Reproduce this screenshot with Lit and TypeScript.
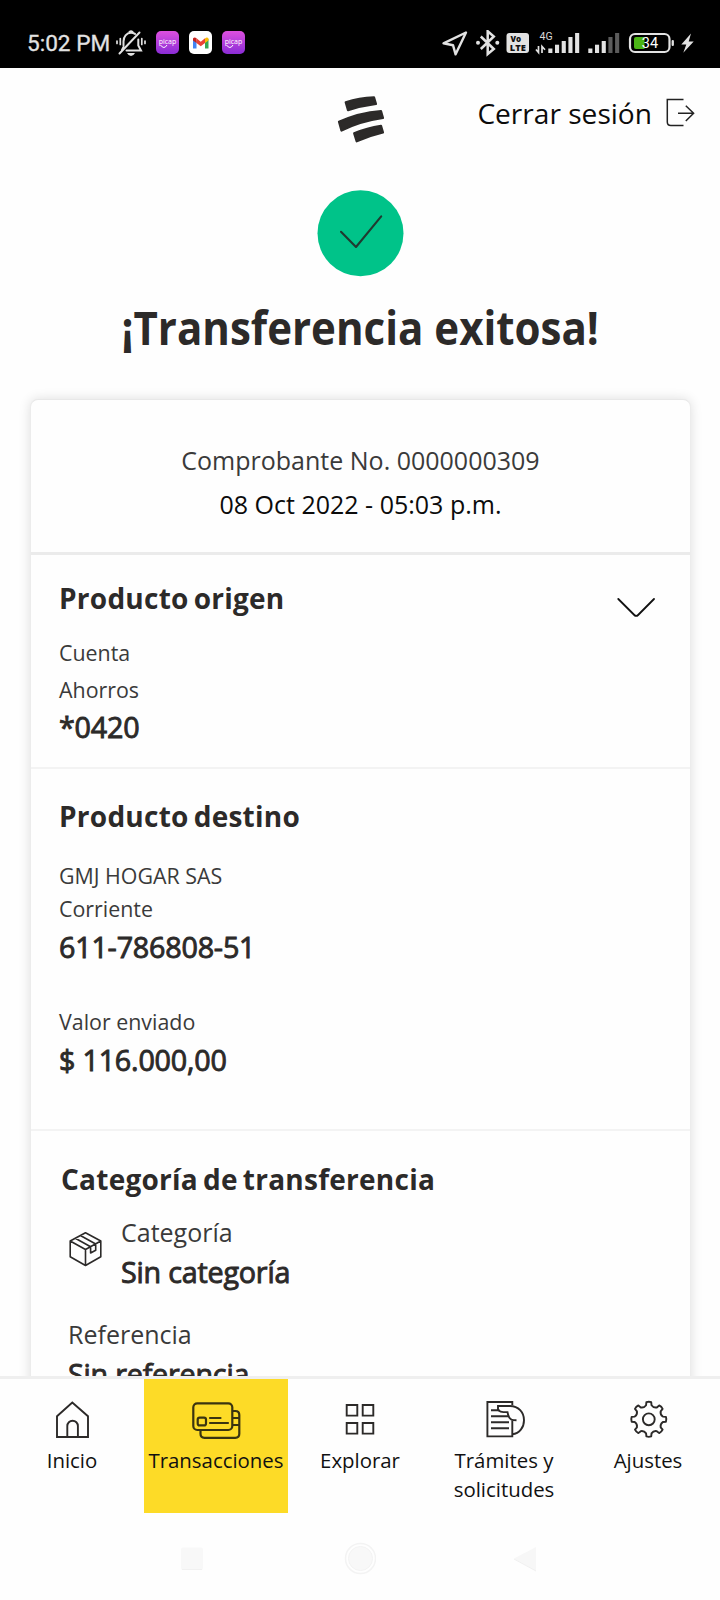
import { LitElement, html, css, svg } from "lit";
import { customElement } from "lit/decorators.js";

// Outline of an eight-toothed gear centred on (cx, cy).
function gearPath(cx: number, cy: number): string {
  const pt = (r: number, deg: number) => {
    const a = (deg * Math.PI) / 180;
    return `${(cx + r * Math.cos(a)).toFixed(2)} ${(cy + r * Math.sin(a)).toFixed(2)}`;
  };
  let d = "";
  for (let i = 0; i < 8; i++) {
    const c = i * 45 - 90;
    d += `${i ? "L" : "M"}${pt(14.3, c - 11)} L${pt(17.3, c - 8)} Q${pt(18, c)} ${pt(17.3, c + 8)} L${pt(14.3, c + 11)} Q${pt(12.2, c + 22.5)} ${pt(14.3, c + 34)} `;
  }
  return d + "Z";
}

// Every icon is drawn in screen units; the viewBox picks out its own area.
const icon = (x: number, y: number, w: number, h: number, body: unknown) =>
  html`<svg width=${w} height=${h} viewBox="${x} ${y} ${w} ${h}" fill="none" aria-hidden="true">${body}</svg>`;

const picap = () => icon(156, 31, 23, 23, svg`
  <defs><linearGradient id="pg" x1="0" y1="0" x2="0" y2="1"><stop offset="0" stop-color="#dd50df"/><stop offset="1" stop-color="#8a2cd6"/></linearGradient></defs>
  <rect x="156" y="31" width="23" height="23" rx="5" fill="url(#pg)"/>
  <text x="167.5" y="44" text-anchor="middle" font-family="Open Sans, sans-serif" font-size="7" fill="#fff">picap</text>
  <path d="M160.500 45q3.500 5 6.500 0" stroke="#fff" stroke-width="1"/>`);

const bars = (x: number, lit: number) =>
  [4.500, 8.300, 12, 16, 20].map((h, i) => svg`<rect x=${x + i * 6.7} y=${53 - h} width="4.100" height=${h} fill=${i < lit ? "#e2e2e2" : "#5c5c5c"}/>`);

@customElement("app-root")
export class AppRoot extends LitElement {
  static styles = css`
    :host { display: block; }
    * { box-sizing: border-box; }
    svg { display: block; flex: none; }
    .page { width: 720px; height: 1600px; background: #fefefe; display: flex; flex-direction: column; overflow: hidden; font-family: "Open Sans", "Noto Sans", sans-serif; color: #2c2a29; white-space: nowrap; }
    .status { height: 68px; flex: none; background: #000; display: flex; justify-content: space-between; padding: 30px 26px 0 27px; color: #e2e2e2; }
    .side { display: flex; align-items: flex-start; }
    .time { width: 89px; font: 400 22.6px/27px Roboto, sans-serif; -webkit-text-stroke: .3px #e2e2e2; }
    .notes { display: flex; gap: 10px; }
    .notes svg { margin-top: 1px; }
    .notes svg:first-child { margin-top: 0; }
    .sys { gap: 6px; }
    .header { height: 122px; flex: none; display: grid; grid-template-columns: 337px 48px 1fr; padding-top: 26px; }
    .logout { display: flex; justify-content: flex-end; padding-right: 25px; gap: 14px; color: #0b0b0b; }
    .logout span { font-size: 28.1px; line-height: 38px; }
    .logout svg { margin-top: 4px; }
    .hero { height: 189px; flex: none; display: flex; flex-direction: column; align-items: center; }
    .title { margin: 19px 0 0; font-size: 46px; line-height: 62px; font-weight: 700; transform: scaleX(.914); }
    .scroll { flex: none; height: 997px; overflow: hidden; padding: 20px 29px 0 30px; }
    .card { height: 1100px; border: 1px solid #ececec; border-top-color: #e8e8e8; border-radius: 8px; background: #fefefe; box-shadow: 0 0 12px rgba(0, 0, 0, .13); }
    .part { border-bottom: 2px solid #f3f3f3; padding-left: 28px; }
    .receipt { height: 155px; border-bottom: 3px solid #ebebeb; padding: 38px 0 0; text-align: center; font-size: 25px; line-height: 44.4px; color: #3a3a3a; }
    .date { color: #0b0b0b; }
    .origin { height: 214px; padding-top: 23px; display: flex; justify-content: space-between; padding-right: 35px; }
    .origin svg { margin-top: 19px; }
    .dest { height: 362px; padding-top: 27px; }
    h2 { margin: 0; font-size: 28px; line-height: 40px; font-weight: 700; letter-spacing: .25px; word-spacing: -2.5px; }
    .label { font-size: 21.4px; line-height: 32.6px; color: #3a3a3a; }
    .value { font-size: 28.7px; line-height: 40px; letter-spacing: -.2px; -webkit-text-stroke: .9px #2c2a29; }
    .origin .label { line-height: 36.7px; }
    .origin .first { margin-top: 17px; }
    .origin .value { margin-top: -1px; }
    .dest .first { margin-top: 24px; }
    .dest .value { margin-top: 2px; }
    .dest .amount { margin-top: 38.4px; }
    .category { padding: 28px 0 0 30px; }
    .row { display: flex; gap: 19px; margin: 15px 0 0 8px; }
    .row svg { margin-top: 17px; }
    .big { font-size: 25px; line-height: 36px; color: #3a3a3a; }
    .category .value { margin-top: 2px; }
    .ref { margin: 24px 0 0 7px; }
    .nav { height: 138px; flex: none; border-top: 3px solid #efefef; display: grid; grid-template-columns: repeat(5, 144px); background: #fefefe; }
    .item { display: flex; flex-direction: column; align-items: center; padding-top: 20px; font-size: 20.4px; line-height: 29px; text-align: center; color: #111; height: 134px; }
    .item span { margin-top: 6px; white-space: pre-line; }
    .active { background: #fddb27; }
    .keys { flex: 1; display: grid; grid-template-columns: repeat(3, 32px); column-gap: 134px; justify-content: center; padding-top: 28px; }
  `;

  render() {
    const ink = "#2c2a29";
    return html`
      <div class="page">
        <div class="status">
          <div class="side">
            <div class="time">5:02 PM</div>
            <div class="notes">
              ${icon(116, 30, 30, 27, svg`
                <g stroke="#e2e2e2" stroke-width="2" stroke-linecap="round">
                  <path d="M119.500 53.500L139.500 32.500"/>
                  <path d="M123.500 45.500V41.500c0-5 3-8.700 7.500-8.700 1.500 0 2.800.4 4 1.100"/>
                  <path d="M138.300 39.500v6l2.700 5H126.500M122 50l1.500-3"/>
                  <path d="M129.500 32q1.500-1.500 3 0"/>
                  <path d="M117 41v2.500M120.300 38.500v6M141.800 38.500v6M145 41v2.500" stroke-width="1.700"/>
                </g>
                <path d="M127 53h8q-1.500 3-4 3t-4-3z" fill="#e2e2e2"/>`)}
              ${picap()}
              ${icon(189, 31, 23, 23, svg`
                <rect x="189" y="31" width="23" height="23" rx="5" fill="#fff"/>
                <path d="M193 39v9.500h3.500V41z" fill="#4285f4"/>
                <path d="M208.500 39v9.500H205V41z" fill="#34a853"/>
                <path d="M205 38.500V43l3.500-2.500v-2q-1.500-2-3.500 0z" fill="#fbbc04"/>
                <path d="M196.500 38.300l4.250 3.400 4.250-3.400V43l-4.250 3.200L196.500 43z" fill="#ea4335"/>
                <path d="M193 38.500v2l3.500 2.500v-4.700q-2-1.800-3.500.2z" fill="#c5221f"/>`)}
              ${picap()}
            </div>
          </div>
          <div class="side sys">
            ${icon(441, 30, 28, 27, svg`<path d="M467 32.500L444.500 43.300L454 45.200L456.600 54.300Z" stroke="#e2e2e2" stroke-width="2.400" stroke-linejoin="round"/>`)}
            ${icon(475, 30, 26, 27, svg`
              <path d="M481.800 36.500L494.800 49L488.700 54V31.200L494.800 36.500L481.800 49" stroke="#e2e2e2" stroke-width="2.500"/>
              <circle cx="479" cy="42.800" r="2" fill="#e2e2e2"/><circle cx="498.300" cy="42.800" r="2" fill="#e2e2e2"/>`)}
            ${icon(507, 30, 23, 27, svg`
              <rect x="507.500" y="33" width="22.500" height="20" rx="3" fill="#e2e2e2"/>
              <g font-family="Open Sans, sans-serif" font-weight="800" font-size="8" fill="#111">
                <text x="511.500" y="42">Vo</text><text x="510.800" y="50.800" textLength="16" lengthAdjust="spacingAndGlyphs">LTE</text>
              </g>`)}
            ${icon(536, 30, 47, 27, svg`
              <text x="540.500" y="39.500" font-family="Roboto, sans-serif" font-size="10.500" fill="#d8d8d8">4G</text>
              <path d="M537 49.500l2.500 3V46M543 53v-6.500l3 3.300" stroke="#e2e2e2" stroke-width="1.700"/>
              ${bars(549.300, 5)}`)}
            ${icon(589, 30, 34, 27, bars(589.300, 3))}
            ${icon(629, 30, 47, 27, svg`
              <rect x="631" y="34" width="39.500" height="18" rx="5" stroke="#e2e2e2" stroke-width="2.200"/>
              <rect x="672.600" y="40" width="2.300" height="6" rx="1" fill="#e2e2e2"/>
              <path d="M637 37h8.500v12H637q-2 0-2-2v-8q0-2 2-2z" fill="#4bb516"/>
              <text x="651" y="48.300" text-anchor="middle" font-family="Roboto, sans-serif" font-size="14.500" fill="#fff">34</text>`)}
            ${icon(681, 30, 13, 27, svg`<path d="M691 33.500L681.300 44.500H686.300L683.300 52.800L693.700 41.500H688.700Z" fill="#e2e2e2"/>`)}
          </div>
        </div>

        <div class="header">
          <i></i>
          ${icon(337, 94, 48, 50, svg`
            <g fill=${ink} stroke=${ink} stroke-width="2.200" stroke-linejoin="round">
              <path d="M345.700 102.300Q359 98 374 97.300L376 104Q361 106 348 110.200Z"/>
              <path d="M339 121.800Q359 112.600 381 111L383 118Q360 121.300 341.500 130.600Z"/>
              <path d="M354.200 133.300Q367 127.800 381 125.800L383 132.500Q369 135.800 356.700 141.300Z"/>
            </g>`)}
          <div class="logout">
            <span>Cerrar sesión</span>
            ${icon(666, 98, 29, 29, svg`<path d="M683.500 99.400H667.300V122q0 3.500 3.500 3.500h12.700M678 113.300h15.500M685.800 105.800l7.800 7.500-7.800 7.700" stroke="#222" stroke-width="1.500"/>`)}
          </div>
        </div>

        <div class="hero">
          ${icon(317, 190, 87, 87, svg`
            <circle cx="360.500" cy="233.300" r="43" fill="#00c389"/>
            <path d="M341 231.800L356 247L381.200 216.300" stroke="#203a30" stroke-width="2.100" stroke-linecap="round" stroke-linejoin="round"/>`)}
          <h1 class="title">¡Transferencia exitosa!</h1>
        </div>

        <div class="scroll">
          <div class="card">
            <div class="part receipt">
              <div>Comprobante No. 0000000309</div>
              <div class="date">08 Oct 2022 - 05:03 p.m.</div>
            </div>
            <div class="part origin">
              <div>
                <h2>Producto origen</h2>
                <div class="label first">Cuenta</div>
                <div class="label">Ahorros</div>
                <div class="value">*0420</div>
              </div>
              ${icon(615, 597, 40, 22, svg`<path d="M618.300 599L634.300 615q1.900 1.900 3.800 0L654 599" stroke="#111" stroke-width="1.800" stroke-linecap="round"/>`)}
            </div>
            <div class="part dest">
              <h2>Producto destino</h2>
              <div class="label first">GMJ HOGAR SAS</div>
              <div class="label">Corriente</div>
              <div class="value">611-786808-51</div>
              <div class="label amount">Valor enviado</div>
              <div class="value">$ 116.000,00</div>
            </div>
            <div class="category">
              <h2>Categoría de transferencia</h2>
              <div class="row">
                ${icon(69, 1231, 33, 36, svg`<path d="M85.500 1232.700L100.800 1241V1256.800L85.500 1265.500L70.200 1256.800V1241ZM70.200 1241L85.500 1249.500L100.800 1241M85.500 1249.500V1265.500M75.300 1238.200L90.600 1246.700M80.400 1235.500L95.700 1244M90.600 1246.700V1253L95.700 1250.300V1244" stroke=${ink} stroke-width="1.600" stroke-linejoin="round"/>`)}
                <div>
                  <div class="big">Categoría</div>
                  <div class="value">Sin categoría</div>
                </div>
              </div>
              <div class="ref">
                <div class="big">Referencia</div>
                <div class="value">Sin referencia</div>
              </div>
            </div>
          </div>
        </div>

        <div class="nav">
          <div class="item">
            ${icon(54, 1399, 36, 41, svg`<path d="M57 1416.300L72.300 1402.500L88 1416.300V1437H57ZM67.300 1437V1426a5.300 5.300 0 0 1 10.600 0V1437" stroke=${ink} stroke-width="1.900"/>`)}
            <span>Inicio</span>
          </div>
          <div class="item active">
            ${icon(191, 1399, 50, 41, svg`
              <g stroke="#3a3410" stroke-width="2.200" stroke-linecap="round">
                <rect x="193.300" y="1403.300" width="39" height="26.700" rx="4"/>
                <rect x="197.700" y="1417.600" width="8.300" height="7.800" rx="2"/>
                <path d="M210 1418h10.500M210 1423h18M233 1411h2.300q4 0 4 4v18.800q0 4-4 4H204.500q-4 0-4-4V1431M233 1418h6M233 1425h6"/>
              </g>`)}
            <span>Transacciones</span>
          </div>
          <div class="item">
            ${icon(342, 1399, 36, 41, svg`<path d="M346.700 1405h10.600v10.600h-10.600zM362.700 1405h10.600v10.600h-10.600zM346.700 1423h10.600v10.600h-10.600zM362.700 1423h10.600v10.600h-10.600z" stroke=${ink} stroke-width="1.900"/>`)}
            <span>Explorar</span>
          </div>
          <div class="item">
            ${icon(483, 1399, 42, 41, svg`
              <g stroke=${ink} stroke-width="1.900">
                <path d="M512.300 1405V1402H487.400V1436.400H512.300V1420.500"/>
                <path d="M512.300 1434.300C519.500 1433.500 524 1427.500 524 1420.200C524 1412.500 518.500 1406 510 1406H498V1410q2.500 2.100 5.500 2.100H507.500Q508.500 1418 511.500 1419.700Q513 1420.300 516.500 1420.300"/>
                <path d="M491 1410.200h8.500M491 1416.200h17M491 1422.200h18M491 1428.200h18"/>
              </g>`)}
            <span>Trámites y
solicitudes</span>
          </div>
          <div class="item">
            ${icon(628, 1399, 40, 41, svg`
              <path d=${gearPath(648.8, 1419.3)} stroke=${ink} stroke-width="1.900" stroke-linejoin="round"/>
              <circle cx="648.800" cy="1419.300" r="5.900" stroke=${ink} stroke-width="1.900"/>`)}
            <span>Ajustes</span>
          </div>
        </div>

        <div class="keys">
          ${icon(178, 1542, 32, 34, svg`<rect x="181" y="1547.500" width="22" height="22.500" rx="2" fill="#f8f8f8"/><path d="M182 1569.500h20" stroke="#f1f1f1"/>`)}
          ${icon(344, 1542, 32, 34, svg`<circle cx="360.500" cy="1558.500" r="15" stroke="#f3f3f3" stroke-width="1.500"/><circle cx="360.500" cy="1558.500" r="12" fill="#f8f8f8" stroke="#f3f3f3"/>`)}
          ${icon(510, 1542, 32, 34, svg`<path d="M514 1558.500L536 1547V1571Z" fill="#f7f7f7"/><path d="M514 1559L536 1571" stroke="#f0f0f0"/>`)}
        </div>
      </div>`;
  }
}
